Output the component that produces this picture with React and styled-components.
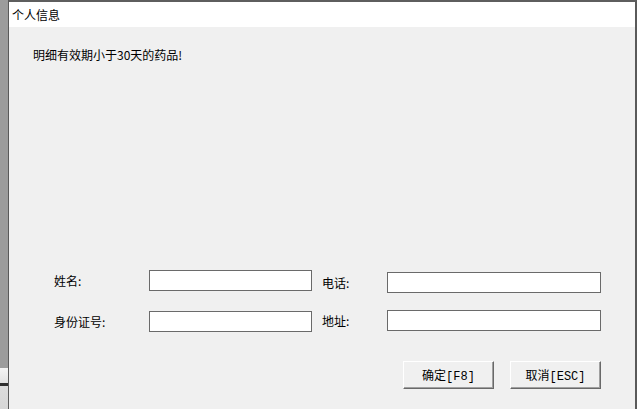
import React from 'react'
import styled, { createGlobalStyle } from 'styled-components'

const GlobalStyle = createGlobalStyle`
    html, body {
        margin: 0;
        padding: 0;
        height: 100%;
        overflow: hidden;
    }

    body {
        font-family: "Noto Sans CJK SC", "Liberation Sans", sans-serif;
        font-size: 12px;
        color: #000;
    }

    #root {
        height: 100%;
    }
`

const StyledDesktop = styled.div`
    display: flex;
    width: 637px;
    height: 409px;
`

const StyledBehind = styled.div`
    width: 8px;
    flex-shrink: 0;
    background: linear-gradient(
        to bottom,
        #9c9c9c 0,
        #9c9c9c 368px,
        #f4f4f4 368px,
        #e2e2e2 383px,
        #2e2e2e 383px,
        #2e2e2e 386px,
        #dcdcdc 386px,
        #d6d6d6 100%
    );
`

const StyledWindow = styled.div`
    flex: 1;
    display: flex;
    flex-direction: column;
    border-left: 1px solid #5a5a5a;
    border-top: 2px solid #5e5e5e;
    border-right: 2px solid #5a5a5a;
    background-color: #f0f0f0;
`

const StyledTitleBar = styled.div`
    height: 25px;
    display: flex;
    align-items: center;
    padding-left: 3px;
    background-color: #fff;
    font-size: 12px;
    line-height: 16px;
`

const StyledBody = styled.div`
    flex: 1;
    display: flex;
    flex-direction: column;
    padding: 20px 34px 20px 0;
`

const StyledMessage = styled.div`
    padding-left: 24px;
    line-height: 16px;
`

const StyledForm = styled.div`
    margin-top: auto;
    display: flex;
    flex-direction: column;
    padding-left: 45px;
`

const StyledRow = styled.div`
    display: flex;
    height: 23px;
    margin-bottom: ${p => p.gap || 0}px;
`

const StyledField = styled.div`
    display: flex;
    align-items: center;
    align-self: flex-start;
    margin-top: ${p => p.shift || 0}px;
    margin-right: ${p => p.space || 0}px;
`

const StyledLabel = styled.span`
    width: ${p => p.width}px;
    line-height: 16px;
`

const StyledInput = styled.input`
    box-sizing: border-box;
    width: ${p => p.width}px;
    height: 21px;
    margin: 0;
    padding: 0 3px;
    border: 1px solid #6a6a6a;
    background-color: #fff;
    font-family: inherit;
    font-size: 12px;
    outline: none;
`

const StyledActions = styled.div`
    display: flex;
    justify-content: flex-end;
    gap: 16px;
    margin-top: 28px;
`

const StyledButton = styled.button`
    box-sizing: border-box;
    width: 91px;
    height: 28px;
    padding: 0;
    border: 1px solid;
    border-color: #fff #696969 #696969 #fff;
    box-shadow: inset -1px -1px 0 #a0a0a0;
    background-color: #f0f0f0;
    font-family: "Liberation Mono", "Noto Sans CJK SC", monospace;
    font-size: 12px;
    color: #000;
    cursor: pointer;
`

export default class App extends React.Component {
    render() {
        return (
            <StyledDesktop>
                <GlobalStyle />
                <StyledBehind />
                <StyledWindow>
                    <StyledTitleBar>个人信息</StyledTitleBar>
                    <StyledBody>
                        <StyledMessage>明细有效期小于30天的药品!</StyledMessage>
                        <StyledForm>
                            <StyledRow gap={17}>
                                <StyledField space={10}>
                                    <StyledLabel width={95}>姓名:</StyledLabel>
                                    <StyledInput width={163} />
                                </StyledField>
                                <StyledField shift={2}>
                                    <StyledLabel width={65}>电话:</StyledLabel>
                                    <StyledInput width={214} />
                                </StyledField>
                            </StyledRow>
                            <StyledRow>
                                <StyledField shift={1} space={10}>
                                    <StyledLabel width={95}>身份证号:</StyledLabel>
                                    <StyledInput width={163} />
                                </StyledField>
                                <StyledField>
                                    <StyledLabel width={65}>地址:</StyledLabel>
                                    <StyledInput width={214} />
                                </StyledField>
                            </StyledRow>
                        </StyledForm>
                        <StyledActions>
                            <StyledButton>确定[F8]</StyledButton>
                            <StyledButton>取消[ESC]</StyledButton>
                        </StyledActions>
                    </StyledBody>
                </StyledWindow>
            </StyledDesktop>
        )
    }
}
